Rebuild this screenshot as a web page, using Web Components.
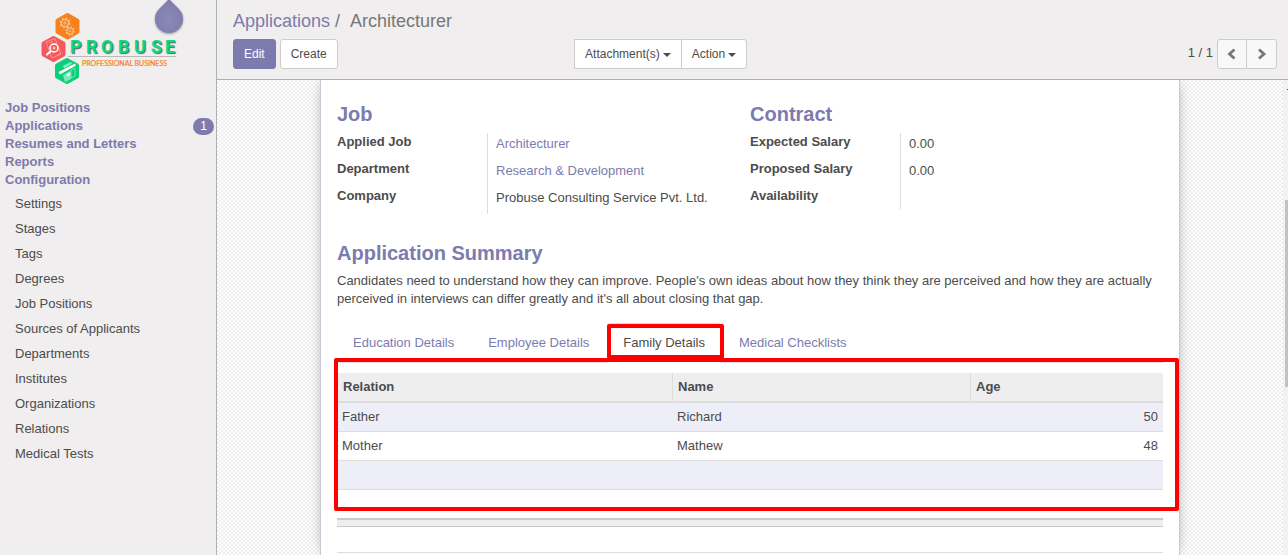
<!DOCTYPE html>
<html lang="en">
<head>
<meta charset="utf-8">
<title>Architecturer - Applications</title>
<style>
  html, body { margin: 0; height: 100%; }
  body {
    font: 13px/18px "Liberation Sans", Arial, sans-serif;
    color: #4c4c4c;
    --brand: #7c7bad;
    --panel: #f0eeee;
    --line: #dddddd;
    --edge: #afafb6;
    --mark: #ff0000;
    overflow: hidden;
  }
</style>
</head>
<body>
<app-shell>
  <side-menu slot="side">
    <brand-logo slot="logo"></brand-logo>
    <menu-link level="top">Job Positions</menu-link>
    <menu-link level="top" badge="1">Applications</menu-link>
    <menu-link level="top">Resumes and Letters</menu-link>
    <menu-link level="top">Reports</menu-link>
    <menu-link level="top">Configuration</menu-link>
    <menu-link>Settings</menu-link>
    <menu-link>Stages</menu-link>
    <menu-link>Tags</menu-link>
    <menu-link>Degrees</menu-link>
    <menu-link>Job Positions</menu-link>
    <menu-link>Sources of Applicants</menu-link>
    <menu-link>Departments</menu-link>
    <menu-link>Institutes</menu-link>
    <menu-link>Organizations</menu-link>
    <menu-link>Relations</menu-link>
    <menu-link>Medical Tests</menu-link>
  </side-menu>
  <control-panel slot="head"></control-panel>
  <record-sheet>
    <div slot="groups">
      <field-group heading="Job">
        <field-row label="Applied Job" link>Architecturer</field-row>
        <field-row label="Department" link>Research &amp; Development</field-row>
        <field-row label="Company">Probuse Consulting Service Pvt. Ltd.</field-row>
      </field-group>
    </div>
    <div slot="groups">
      <field-group heading="Contract">
        <field-row label="Expected Salary">0.00</field-row>
        <field-row label="Proposed Salary">0.00</field-row>
        <field-row label="Availability"></field-row>
      </field-group>
    </div>
    <span slot="summary">Candidates need to understand how they can improve. People's own ideas about how they think they are perceived and how they are actually perceived in interviews can differ greatly and it's all about closing that gap.</span>
    <tab-strip slot="tabs"></tab-strip>
    <family-table slot="pane"></family-table>
  </record-sheet>
  <scroll-rail slot="rail"></scroll-rail>
</app-shell>

<script>
  const component = (name, html, setup) => {
    const template = document.createElement('template');
    template.innerHTML = html;
    customElements.define(name, class extends HTMLElement {
      connectedCallback() {
        if (this.shadowRoot) return;
        this.attachShadow({ mode: 'open' }).append(template.content.cloneNode(true));
        if (setup) setup(this, this.shadowRoot);
      }
    });
  };

  component('app-shell', `
    <style>
      :host { display: grid; grid-template-columns: 217px minmax(0, 1fr); height: 100vh; overflow: hidden; }
      aside { box-sizing: border-box; background: var(--panel); border-right: 1px solid var(--edge); min-height: 0; overflow: hidden; }
      main { display: flex; flex-direction: column; min-width: 0; min-height: 0; }
      .view { flex: 1; display: flex; min-height: 0; }
      .canvas {
        flex: 1; min-width: 0; overflow: hidden;
        background: repeating-conic-gradient(#eeeeee 0 25%, #ffffff 0 50%) 0 0 / 4px 4px;
      }
    </style>
    <aside><slot name="side"></slot></aside>
    <main>
      <slot name="head"></slot>
      <div class="view">
        <div class="canvas"><slot></slot></div>
        <slot name="rail"></slot>
      </div>
    </main>`);

  component('brand-logo', `
    <style>
      :host { display: block; position: relative; height: 99px; }
      svg { display: block; }
      .drop { position: absolute; top: 0; right: 27px; }
    </style>
    <svg width="190" height="98" viewBox="0 0 190 98" role="img" aria-label="Probuse Professional Business">
      <g stroke-width="4" stroke-linejoin="round">
        <path d="M67.500 15l10 5.700v11L67.500 37.400l-10-5.700v-11z" fill="#f5821f" stroke="#f5821f"/>
        <path d="M53.500 38l10 5.500v11L53.500 60l-10-5.500v-11z" fill="#f4595c" stroke="#f4595c"/>
        <path d="M67 60l10 5.500v11L67 82l-10-5.500v-11z" fill="#0bcf78" stroke="#0bcf78"/>
      </g>
      <g fill="none" stroke="#fad0a6">
        <circle cx="65" cy="23" r="4.500" stroke-width="1.600" stroke-dasharray="1.800 1.700"/>
        <circle cx="65" cy="23" r="3.600" stroke-width=".8"/>
        <circle cx="65" cy="23" r="1.200" stroke-width=".7"/>
        <circle cx="70" cy="31" r="3.900" stroke-width="1.400" stroke-dasharray="1.500 1.500"/>
        <circle cx="70" cy="31" r="3" stroke-width=".7"/>
        <circle cx="70" cy="31" r="1" stroke-width=".6"/>
      </g>
      <g fill="none" stroke="#f9a3a6" stroke-width=".8">
        <path d="M46 42l9-3.500 6 15.500-9 4z"/>
        <path d="M49 43l4-1.500M57 55l3-1"/>
      </g>
      <g fill="none" stroke="#ffffff">
        <path d="M51 51l-4 3.500" stroke-width="2" stroke-linecap="round"/>
        <circle cx="54" cy="48" r="4" stroke-width="1.500" fill="#f4595c"/>
        <circle cx="54" cy="48" r="1" stroke-width=".8"/>
      </g>
      <g>
        <path d="M62.500 66l8-4 2 1.500-8 5z" fill="#7fe8bb"/>
        <path d="M58.500 72L75 63.500l1 2L60 74.500z" fill="#ffffff"/>
        <path d="M63 75l7-4 1 2v6l-6 3z" fill="#7fe8bb"/>
        <path d="M71 70l4-2v8l-4 2z" fill="none" stroke="#9af0cb" stroke-width=".7"/>
        <path d="M67 74l3-1.500v2.500l-3 1.500z" fill="#ffffff"/>
      </g>
      <g font-family="Roboto, sans-serif" font-weight="700" font-size="18">
        <text x="70 86 101 118 134 151 165" y="53" fill="#12d67c" style="text-shadow: 1px 1px 1px #4e6a78">PROBUSE</text>
      </g>
      <path d="M68 56.500h108" stroke="#b9b9b9"/>
      <text x="82" y="66" font-family="Lato, sans-serif" font-size="7" fill="#f5821f" stroke="#f5821f" stroke-width=".2">PROFESSIONAL BUSINESS</text>
    </svg>
    <svg class="drop" width="40" height="40" viewBox="0 0 40 40" aria-hidden="true" style="filter: drop-shadow(0 1px 1px rgba(0,0,0,.35))">
      <defs>
        <radialGradient id="g" cx=".5" cy=".6" r=".6"><stop offset="0" stop-color="#8b8ab8"/><stop offset="1" stop-color="#7c7bad"/></radialGradient>
      </defs>
      <path d="M20 -1L29.900 9.100A14 14 0 1 1 10.100 9.100Z" fill="url(#g)"/>
    </svg>`);

  component('side-menu', `
    <style>
      :host { display: block; }
      nav { display: flex; flex-direction: column; }
    </style>
    <slot name="logo"></slot>
    <nav aria-label="Recruitment"><slot></slot></nav>`);

  component('menu-link', `
    <style>
      :host { display: block; }
      a { display: flex; justify-content: space-between; align-items: center; text-decoration: none; color: #4c4c4c; padding: 5px 2px 0 15px; height: 25px; box-sizing: border-box; }
      :host([level="top"]) a { color: var(--brand); font-weight: 700; padding: 0 2px 0 5px; height: 18px; }
      .badge { box-sizing: border-box; height: 17px; width: 21px; border-radius: 9px; text-align: center; background: var(--brand); color: #ffffff; font-size: 12px; line-height: 17px; font-weight: 400; }
    </style>
    <a href="#"><slot></slot></a>`, (host, root) => {
    if (host.hasAttribute('badge')) {
      const badge = document.createElement('span');
      badge.className = 'badge';
      badge.textContent = host.getAttribute('badge');
      root.querySelector('a').append(badge);
    }
  });

  component('control-panel', `
    <style>
      :host { display: block; box-sizing: border-box; background: var(--panel); border-bottom: 1px solid var(--edge); padding: 9px 11px 10px 16px; }
      .crumbs { font-size: 18px; line-height: 24px; color: #777777; display: flex; }
      .crumbs a { color: var(--brand); text-decoration: none; }
      .sep { padding: 0 10px 0 5px; }
      .bar { margin-top: 6px; display: grid; grid-template-columns: 33fr 68fr; }
      .left { display: flex; gap: 4px; }
      .right { display: flex; justify-content: space-between; }
      .set, .pager { display: flex; align-items: center; }
      button { font: 12px/18px "Liberation Sans", Arial, sans-serif; height: 30px; margin: 0; padding: 0 10px; border: 1px solid #cccccc; border-radius: 3px; background: #ffffff; color: #4c4c4c; display: flex; align-items: center; gap: 3px; }
      .primary { background: var(--brand); border-color: var(--brand); color: #ffffff; }
      .set button:first-child { border-radius: 0; margin-right: -1px; }
      .set button:last-child { border-radius: 0 3px 3px 0; }
      .caret { border: 4px solid transparent; border-top-color: #4c4c4c; border-bottom: 0; margin-top: 2px; }
      .count { margin-right: 4px; margin-bottom: 2px; }
      .pager button { width: 31px; padding: 0; justify-content: center; background: #f8f8f8; }
      .pager .prev { width: 30px; border-radius: 3px 0 0 3px; margin-right: -1px; }
      .pager .next { border-radius: 0 3px 3px 0; }
    </style>
    <div class="crumbs"><a href="#">Applications</a><span class="sep">/</span><span>Architecturer</span></div>
    <div class="bar">
      <div class="left"><button class="primary">Edit</button><button>Create</button></div>
      <div class="right">
        <div class="set">
          <button>Attachment(s)<span class="caret"></span></button>
          <button>Action<span class="caret"></span></button>
        </div>
        <div class="pager">
          <span class="count">1 / 1</span>
          <button class="prev" aria-label="Previous"><svg width="12" height="12" viewBox="0 0 12 12"><path d="M8.500 1.500L3.500 6l5 4.500" fill="none" stroke="#777777" stroke-width="2.800"/></svg></button>
          <button class="next" aria-label="Next"><svg width="12" height="12" viewBox="0 0 12 12"><path d="M3 1.500L8 6l-5 4.500" fill="none" stroke="#777777" stroke-width="2.800"/></svg></button>
        </div>
      </div>
    </div>`);

  component('record-sheet', `
    <style>
      :host { display: block; box-sizing: border-box; max-width: 860px; min-height: 100%; margin: 0 auto; padding: 23px 16px 0; background: #ffffff; border: 1px solid #c8c8d3; border-width: 0 1px; box-shadow: 0 0 14px -4px rgba(0,0,0,.4); }
      .groups { display: grid; grid-template-columns: 1fr 1fr; }
      h2 { margin: 28px 0 8px; font-size: 20px; line-height: 22px; color: var(--brand); }
      p { margin: 0 0 15px; }
      .pane { padding-top: 10px; position: relative; }
      .pane::after { content: ""; position: absolute; top: -5px; bottom: -21px; left: -3px; right: -16px; border: 4px solid var(--mark); border-radius: 2px; pointer-events: none; }
      .footer-bar { margin-top: 28px; height: 6px; background: #eeeeee; border-top: 2px solid #cacaca; border-bottom: 1px solid #cacaca; }
      hr { margin: 25px 0 0; border: 0; border-top: 1px solid var(--line); }
    </style>
    <div class="groups"><slot name="groups"></slot></div>
    <h2>Application Summary</h2>
    <p><slot name="summary"></slot></p>
    <slot name="tabs"></slot>
    <div class="pane"><slot name="pane"></slot></div>
    <div class="footer-bar"></div>
    <hr>`);

  component('field-group', `
    <style>
      :host { display: block; }
      h2 { margin: 0 0 8px; font-size: 20px; line-height: 22px; color: var(--brand); }
    </style>
    <h2></h2>
    <slot></slot>`, (host, root) => {
    root.querySelector('h2').textContent = host.getAttribute('heading');
  });

  component('field-row', `
    <style>
      :host { display: block; }
      dl { margin: 0; display: grid; grid-template-columns: 150px 1fr; }
      dt { font-weight: 700; }
      dd { margin: 0; box-sizing: border-box; min-height: 22px; padding: 2px 0 7px 8px; border-left: 1px solid var(--line); }
      dd:empty { padding: 0; }
      a { color: var(--brand); text-decoration: none; }
    </style>
    <dl><dt></dt><dd></dd></dl>`, (host, root) => {
    root.querySelector('dt').textContent = host.getAttribute('label');
    if (!host.textContent.trim()) return;
    const slot = document.createElement('slot');
    const dd = root.querySelector('dd');
    if (host.hasAttribute('link')) {
      const a = document.createElement('a');
      a.href = '#';
      a.append(slot);
      dd.append(a);
    } else {
      dd.append(slot);
    }
  });

  component('tab-strip', `
    <style>
      :host { display: block; }
      nav { display: flex; gap: 2px; border-bottom: 1px solid var(--line); }
      a { position: relative; padding: 10px 15px; border: 1px solid transparent; border-bottom: 0; color: var(--brand); text-decoration: none; white-space: nowrap; }
      .active { color: #4c4c4c; background: #ffffff; border-color: var(--line); border-radius: 3px 3px 0 0; margin-bottom: -1px; padding-bottom: 11px; }
      .active::after { content: ""; position: absolute; top: 0; bottom: 4px; left: -1px; right: -4px; border: 4px solid var(--mark); border-radius: 2px; pointer-events: none; }
    </style>
    <nav aria-label="Details">
      <a href="#">Education Details</a>
      <a href="#">Employee Details</a>
      <a href="#" class="active" aria-current="page">Family Details</a>
      <a href="#">Medical Checklists</a>
    </nav>`);

  component('family-table', `
    <style>
      :host { display: block; }
      table { width: 100%; table-layout: fixed; border-collapse: separate; border-spacing: 0; }
      .relation { width: 335px; }
      .name { width: 298px; }
      th, td { text-align: left; padding: 5px; height: 18px; }
      th { background: #eeeeee; border-left: 1px solid var(--line); border-bottom: 2px solid var(--line); }
      td { border-bottom: 1px solid var(--line); }
      tbody tr:nth-child(odd) { background: #eeeef8; }
      .age { text-align: right; }
    </style>
    <table>
      <colgroup><col class="relation"><col class="name"><col></colgroup>
      <thead><tr><th>Relation</th><th>Name</th><th>Age</th></tr></thead>
      <tbody>
        <tr><td>Father</td><td>Richard</td><td class="age">50</td></tr>
        <tr><td>Mother</td><td>Mathew</td><td class="age">48</td></tr>
        <tr><td colspan="3"></td></tr>
      </tbody>
    </table>`);

  component('scroll-rail', `
    <style>
      :host { display: flex; flex-direction: column; align-items: flex-end; flex: none; width: 5px; background: #f1f1f1; }
      .arrow { width: 1px; height: 1px; margin-top: 9px; background: #505050; }
      .thumb { width: 3px; height: 187px; margin-top: 110px; background: #c1c1c1; }
    </style>
    <div class="arrow"></div>
    <div class="thumb"></div>`);
</script>
</body>
</html>
